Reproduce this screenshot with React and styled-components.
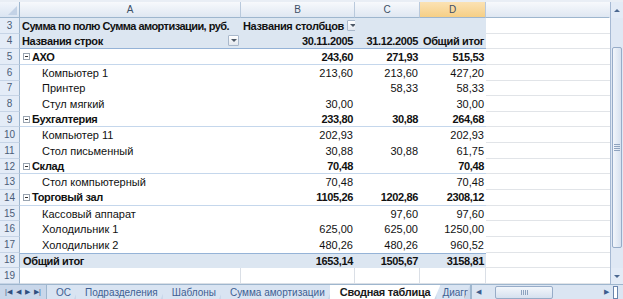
import React from 'react';
import styled, { createGlobalStyle, css } from 'styled-components';

const GlobalStyle = createGlobalStyle`
  html, body {
    margin: 0;
    padding: 0;
    background: #ffffff;
    overflow: hidden;
  }
  body {
    font-family: "Liberation Sans", Arial, sans-serif;
  }
`;

const COLS = '20px 221px 114px 65px 66px 1fr';
const ROW_H = '15.65px';

const Window = styled.div`
  width: 623px;
  height: 299px;
  display: flex;
  flex-direction: column;
  background: #ffffff;
  border-top: 2px solid #e9eef5;
  box-sizing: border-box;
`;

const Body = styled.div`
  flex: 1;
  display: flex;
  min-height: 0;
`;

const Sheet = styled.div`
  flex: 1;
  display: flex;
  flex-direction: column;
`;

const HeaderRow = styled.div`
  display: grid;
  grid-template-columns: ${COLS};
  height: 16px;
`;

const Corner = styled.div`
  background: linear-gradient(#f1f5fb, #dbe5f2);
  border-right: 1px solid #9eb6ce;
  border-bottom: 1px solid #9eb6ce;
  box-sizing: border-box;
  position: relative;
  &::after {
    content: '';
    position: absolute;
    right: 2px;
    bottom: 2px;
    border-left: 9px solid transparent;
    border-bottom: 9px solid #c3d2e6;
  }
`;

const ColHead = styled.div`
  display: flex;
  align-items: center;
  justify-content: center;
  font-size: 10px;
  color: #3d4f66;
  box-sizing: border-box;
  border-right: 1px solid ${p => (p.$blank ? 'transparent' : '#b9c9dc')};
  border-bottom: 1px solid #9eb6ce;
  background: ${p =>
    p.$active
      ? 'linear-gradient(#fbe2b4, #f6cf86)'
      : 'linear-gradient(#f7f9fc, #dfe7f2)'};
`;

const Row = styled.div`
  display: grid;
  grid-template-columns: ${COLS};
  height: ${ROW_H};
  font-size: 11px;
  color: #111;
`;

const RowNum = styled.div`
  display: flex;
  align-items: center;
  justify-content: center;
  font-size: 10px;
  color: #4b5d78;
  background: #e4ecf7;
  border-right: 1px solid #9eb6ce;
  border-bottom: 1px solid #c6d4e6;
  box-sizing: border-box;
`;

const bold = css`
  font-weight: bold;
  letter-spacing: -0.35px;
`;

const kindStyles = {
  head: css`
    background: #dce6f1;
    ${bold}
    overflow: visible;
  `,
  headLast: css`
    background: #dce6f1;
    ${bold}
    border-bottom: 1px solid #95b3d7;
  `,
  group: css`
    ${bold}
    border-bottom: 1px solid #c5d7ec;
  `,
  item: css``,
  total: css`
    background: #dce6f1;
    ${bold}
    border-top: 1px solid #95b3d7;
  `,
  blank: css`
    border-right: 1px solid #dadfe6;
    border-bottom: 1px solid #dadfe6;
  `,
};

const Cell = styled.div`
  display: flex;
  align-items: center;
  justify-content: ${p => (p.$right ? 'flex-end' : 'flex-start')};
  padding: 0 2px 0 ${p => p.$indent || 2}px;
  box-sizing: border-box;
  white-space: nowrap;
  overflow: hidden;
  ${p => kindStyles[p.$kind]}
  ${p => p.$tight && 'letter-spacing: -0.55px;'}
`;

const Filler = styled.div`
  border-bottom: 1px solid #e1e4e8;
  box-sizing: border-box;
`;

const Grow = styled.span`
  flex: 1;
`;

const Dropdown = styled.span`
  width: 11px;
  height: 11px;
  box-sizing: border-box;
  border: 1px solid #a9b8cb;
  border-radius: 1px;
  background: linear-gradient(#ffffff, #e3e8ef);
  display: inline-flex;
  align-items: center;
  justify-content: center;
  margin-left: ${p => p.$gap || 6}px;
  flex-shrink: 0;
  &::after {
    content: '';
    border-left: 3px solid transparent;
    border-right: 3px solid transparent;
    border-top: 3px solid #4d5866;
  }
`;

const Collapse = styled.span`
  width: 7px;
  height: 7px;
  box-sizing: border-box;
  border: 1px solid #9aa4b0;
  display: inline-flex;
  align-items: center;
  justify-content: center;
  margin-right: 2px;
  background: #fff;
  &::after {
    content: '';
    width: 3px;
    height: 1px;
    background: #333;
  }
`;

const VScroll = styled.div`
  width: 13px;
  display: flex;
  flex-direction: column;
  background: #e3ebf6;
  border-left: 1px solid #a6b9d3;
  box-sizing: border-box;
`;

const ScrollArrow = styled.div`
  height: 16px;
  display: flex;
  align-items: center;
  justify-content: center;
  &::after {
    content: '';
    border-left: 3px solid transparent;
    border-right: 3px solid transparent;
    ${p =>
      p.$down
        ? 'border-top: 3px solid #4c6890;'
        : 'border-bottom: 3px solid #4c6890;'}
  }
`;

const Track = styled.div`
  flex: 1;
  display: flex;
  flex-direction: column;
  padding: 29px 1px 20px;
  background: #dfe8f4;
`;

const Thumb = styled.div`
  flex: 1;
  border: 1px solid #97acc8;
  border-radius: 2px;
  background: linear-gradient(90deg, #f2f6fb, #d6e1ef);
  display: flex;
  align-items: center;
  justify-content: center;
  &::after {
    content: '';
    width: 6px;
    height: 7px;
    background: repeating-linear-gradient(#8ea3bf 0 1px, transparent 1px 2px);
  }
`;

const TabBar = styled.div`
  height: 15px;
  display: flex;
  align-items: stretch;
  background: #c9d7ea;
  border-top: 1px solid #9eb6ce;
  box-sizing: border-box;
  font-size: 10px;
  color: #3a5a8c;
`;

const Nav = styled.div`
  width: 47px;
  display: flex;
  align-items: center;
  justify-content: space-around;
  padding: 0 3px;
  box-sizing: border-box;
  border-right: 1px solid #9eb6ce;
  font-size: 7px;
  color: #2f4f7f;
`;

const Tab = styled.div`
  display: flex;
  align-items: center;
  padding: 0 ${p => (p.$active ? 10 : 9)}px;
  margin-left: -4px;
  white-space: nowrap;
  background: ${p => (p.$active ? '#ffffff' : '#d9e4f2')};
  color: ${p => (p.$active ? '#1a1a1a' : '#3e5f92')};
  font-weight: ${p => (p.$active ? 'bold' : 'normal')};
  font-size: ${p => (p.$active ? '11px' : '10px')};
  letter-spacing: ${p => (p.$active ? '-0.3px' : '0')};
  clip-path: polygon(0 0, 100% 0, calc(100% - 6px) 100%, 0 100%);
  z-index: ${p => (p.$active ? 2 : 1)};
  &:first-child {
    margin-left: 0;
  }
  &:last-child {
    padding-left: 6px;
    min-width: 0;
    overflow: hidden;
  }
`;

const Tabs = styled.div`
  display: flex;
  align-items: stretch;
  width: 423px;
  overflow: hidden;
`;

const HScroll = styled.div`
  flex: 1;
  display: flex;
  align-items: center;
  border-left: 2px solid #9eb6ce;
  background: #dbe5f2;
  font-size: 7px;
  color: #3c5d8e;
  padding: 0 4px;
`;

const HThumb = styled.div`
  width: 56px;
  height: 11px;
  margin-left: 14px;
  border: 1px solid #97acc8;
  border-radius: 2px;
  background: linear-gradient(#f2f6fb, #d6e1ef);
  display: flex;
  align-items: center;
  justify-content: center;
  &::after {
    content: '';
    width: 7px;
    height: 5px;
    background: repeating-linear-gradient(90deg, #8ea3bf 0 1px, transparent 1px 2px);
  }
`;

const PushRight = styled.span`
  margin-left: auto;
`;

const Splitter = styled.div`
  width: 3px;
  height: 11px;
  border: 1px solid #6a85ad;
  background: #fff;
  margin: 0 1px 0 4px;
`;

const rows = [
  { n: 5, kind: 'group', name: 'АХО', b: '243,60', c: '271,93', d: '515,53' },
  { n: 6, kind: 'item', name: 'Компьютер 1', b: '213,60', c: '213,60', d: '427,20' },
  { n: 7, kind: 'item', name: 'Принтер', b: '', c: '58,33', d: '58,33' },
  { n: 8, kind: 'item', name: 'Стул мягкий', b: '30,00', c: '', d: '30,00' },
  { n: 9, kind: 'group', name: 'Бухгалтерия', b: '233,80', c: '30,88', d: '264,68' },
  { n: 10, kind: 'item', name: 'Компьютер 11', b: '202,93', c: '', d: '202,93' },
  { n: 11, kind: 'item', name: 'Стол письменный', b: '30,88', c: '30,88', d: '61,75' },
  { n: 12, kind: 'group', name: 'Склад', b: '70,48', c: '', d: '70,48' },
  { n: 13, kind: 'item', name: 'Стол компьютерный', b: '70,48', c: '', d: '70,48' },
  { n: 14, kind: 'group', name: 'Торговый зал', b: '1105,26', c: '1202,86', d: '2308,12' },
  { n: 15, kind: 'item', name: 'Кассовый аппарат', b: '', c: '97,60', d: '97,60' },
  { n: 16, kind: 'item', name: 'Холодильник 1', b: '625,00', c: '625,00', d: '1250,00' },
  { n: 17, kind: 'item', name: 'Холодильник 2', b: '480,26', c: '480,26', d: '960,52' },
  { n: 18, kind: 'total', name: 'Общий итог', b: '1653,14', c: '1505,67', d: '3158,81' },
];

const sheets = ['ОС', 'Подразделения', 'Шаблоны', 'Сумма амортизации', 'Сводная таблица', 'Диаграм'];

const DataRow = ({ row }) => (
  <Row>
    <RowNum>{row.n}</RowNum>
    <Cell $kind={row.kind} $indent={row.kind === 'item' ? 22 : 3}>
      {row.kind === 'group' && <Collapse />}
      {row.name}
    </Cell>
    <Cell $kind={row.kind} $right>{row.b}</Cell>
    <Cell $kind={row.kind} $right>{row.c}</Cell>
    <Cell $kind={row.kind} $right>{row.d}</Cell>
    <Filler />
  </Row>
);

const App = () => (
  <>
    <GlobalStyle />
    <Window>
      <Body>
        <Sheet>
          <HeaderRow>
            <Corner />
            <ColHead>A</ColHead>
            <ColHead>B</ColHead>
            <ColHead>C</ColHead>
            <ColHead $active>D</ColHead>
            <ColHead $blank />
          </HeaderRow>
          <Row>
            <RowNum>3</RowNum>
            <Cell $kind="head" $tight>Сумма по полю Сумма амортизации, руб.</Cell>
            <Cell $kind="head">
              Названия столбцов
              <Dropdown $gap={3} />
            </Cell>
            <Cell $kind="head" />
            <Cell $kind="head" />
            <Filler />
          </Row>
          <Row>
            <RowNum>4</RowNum>
            <Cell $kind="headLast">
              Названия строк
              <Grow />
              <Dropdown />
            </Cell>
            <Cell $kind="headLast" $right>30.11.2005</Cell>
            <Cell $kind="headLast" $right>31.12.2005</Cell>
            <Cell $kind="headLast" $right>Общий итог</Cell>
            <Filler />
          </Row>
          {rows.map(row => (
            <DataRow key={row.n} row={row} />
          ))}
          <Row>
            <RowNum>19</RowNum>
            <Cell $kind="blank" />
            <Cell $kind="blank" />
            <Cell $kind="blank" />
            <Cell $kind="blank" />
            <Filler />
          </Row>
        </Sheet>
        <VScroll>
          <ScrollArrow />
          <Track>
            <Thumb />
          </Track>
          <ScrollArrow $down />
        </VScroll>
      </Body>
      <TabBar>
        <Nav>
          <span>|◀</span>
          <span>◀</span>
          <span>▶</span>
          <span>▶|</span>
        </Nav>
        <Tabs>
          {sheets.map(name => (
            <Tab key={name} $active={name === 'Сводная таблица'}>
              {name}
            </Tab>
          ))}
        </Tabs>
        <HScroll>
          <span>◀</span>
          <HThumb />
          <PushRight>▶</PushRight>
          <Splitter />
        </HScroll>
      </TabBar>
    </Window>
  </>
);

export default App;
